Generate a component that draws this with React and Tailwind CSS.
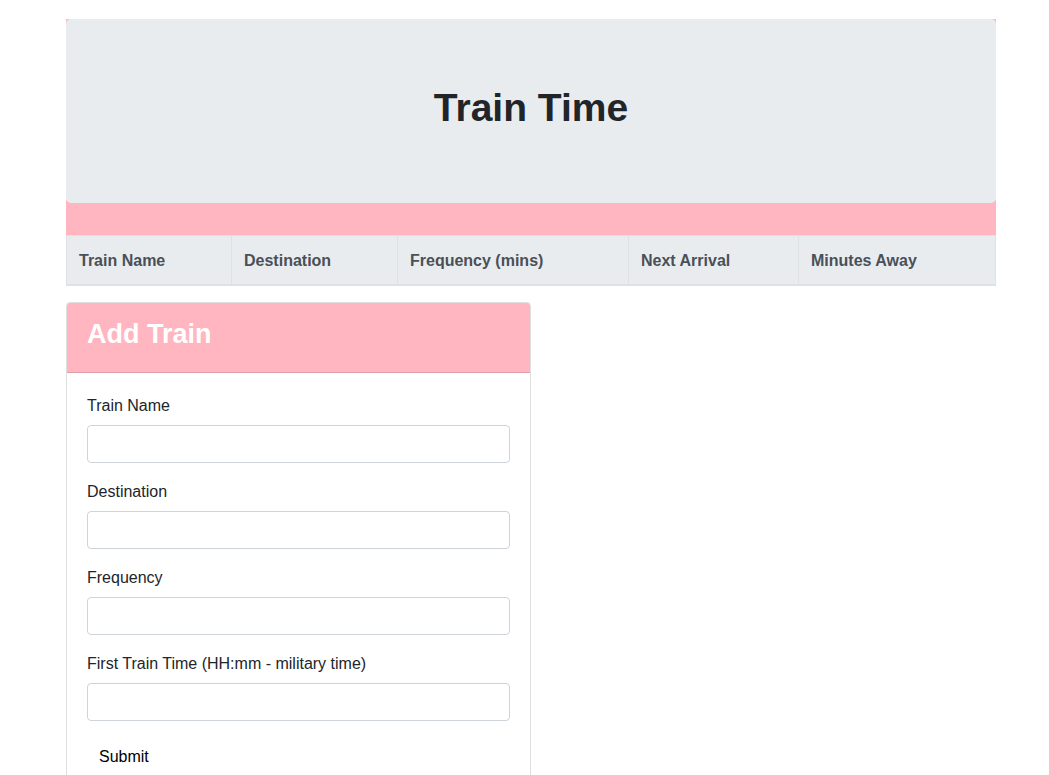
import React from 'react';

const columns = [
    { label: 'Train Name', width: 'w-[164px]' },
    { label: 'Destination', width: 'w-[166px]' },
    { label: 'Frequency (mins)', width: 'w-[231px]' },
    { label: 'Next Arrival', width: 'w-[170px]' },
    { label: 'Minutes Away', width: 'flex-1' },
];

const fields = ['Train Name', 'Destination', 'Frequency', 'First Train Time (HH:mm - military time)'];

const App = () => {
    return (
        <div className="min-h-screen bg-white text-[#212529]" style={{ fontFamily: '"Liberation Sans", Arial, sans-serif' }}>
            <div className="ml-[66px] w-[930px] pt-[19px]">
                <div className="bg-[#ffb6c1] pb-[32px]">
                    <div className="bg-[#e9ecef] rounded-[5px] px-8 pt-[65px] pb-[71px] text-center">
                        <h1 className="text-[39px] leading-[48px] font-bold text-[#212529]">Train Time</h1>
                    </div>
                </div>

                <div className="flex bg-[#e9ecef] border-t border-x border-[#dee2e6] border-b-2 mb-4">
                    {columns.map((col, i) => (
                        <div
                            key={col.label}
                            className={`${col.width} px-3 pt-[13px] pb-[11px] leading-6 text-base font-bold text-[#495057] ${i > 0 ? 'border-l border-[#dee2e6]' : ''}`}
                        >
                            {col.label}
                        </div>
                    ))}
                </div>

                <div className="w-[465px] border border-black/[0.125] rounded-[4px] overflow-hidden">
                    <div className="bg-[#ffb6c1] px-5 pt-3 pb-[11px] border-b border-black/[0.125]">
                        <h2 className="text-[27px] leading-[38px] font-bold text-white mb-2">Add Train</h2>
                    </div>
                    <div className="p-5">
                        {fields.map(f => (
                            <div key={f} className="mb-4">
                                <label className="block text-base leading-6 pt-px mb-[7px] text-[#212529]">{f}</label>
                                <input
                                    type="text"
                                    className="block w-full h-[38px] border border-[#ced4da] rounded-[4px] px-3 bg-white"
                                />
                            </div>
                        ))}
                        <button className="px-3 pt-2 pb-1 text-base leading-6 text-black">Submit</button>
                    </div>
                </div>
            </div>
        </div>
    );
};

export default App;
